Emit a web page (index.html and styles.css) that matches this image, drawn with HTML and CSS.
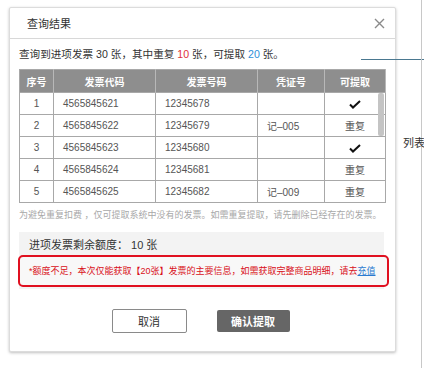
FILE: index.html
```html
<!DOCTYPE html>
<html lang="zh">
<head>
<meta charset="utf-8">
<link rel="stylesheet" href="styles.css">
</head>
<body>
<div class="page">
  <div class="dialog">
    <div class="dlg-head">
      <span class="dlg-title">查询结果</span>
      <svg class="close" width="11" height="11" viewBox="0 0 11 11"><path d="M1 1L10 10M10 1L1 10" stroke="#8a8a8a" stroke-width="1.4" fill="none"/></svg>
    </div>
    <div class="dlg-body">
      <div class="summary">查询到进项发票 30 张，其中重复 <span class="red">10</span> 张，可提取 <span class="blue">20</span> 张。</div>
      <div class="table-wrap">
        <table class="grid">
          <colgroup>
            <col class="c1"><col class="c2"><col class="c3"><col class="c4"><col class="c5">
          </colgroup>
          <thead>
            <tr><th>序号</th><th>发票代码</th><th>发票号码</th><th>凭证号</th><th>可提取</th></tr>
          </thead>
          <tbody>
            <tr><td class="ctr">1</td><td>4565845621</td><td>12345678</td><td></td><td class="ctr"><svg class="chk" width="12" height="9" viewBox="0 0 12 9"><path d="M1 4.5L4 7.5L11 1" stroke="#111" stroke-width="2" fill="none"/></svg></td></tr>
            <tr><td class="ctr">2</td><td>4565845622</td><td>12345679</td><td>记–005</td><td class="ctr">重复</td></tr>
            <tr><td class="ctr">3</td><td>4565845623</td><td>12345680</td><td></td><td class="ctr"><svg class="chk" width="12" height="9" viewBox="0 0 12 9"><path d="M1 4.5L4 7.5L11 1" stroke="#111" stroke-width="2" fill="none"/></svg></td></tr>
            <tr><td class="ctr">4</td><td>4565845624</td><td>12345681</td><td></td><td class="ctr">重复</td></tr>
            <tr><td class="ctr">5</td><td>4565845625</td><td>12345682</td><td>记–009</td><td class="ctr">重复</td></tr>
          </tbody>
        </table>
        <div class="thumb"></div>
      </div>
      <div class="note">为避免重复扣费 ，仅可提取系统中没有的发票。如需重复提取，请先删除已经存在的发票。</div>
      <div class="quota">
        <div class="quota-line">进项发票剩余额度： 10 张</div>
        <div class="warn">*额度不足，本次仅能获取【20张】发票的主要信息，如需获取完整商品明细，请去<a class="link">充值</a></div>
      </div>
      <div class="actions">
        <button class="btn btn-cancel">取消</button>
        <button class="btn btn-ok">确认提取</button>
      </div>
    </div>
  </div>
  <div class="anno-line"></div>
  <div class="anno-edge"></div>
  <div class="anno-label">列表</div>
</div>
</body>
</html>
```

FILE: styles.css
```css
* { box-sizing: border-box; }
html, body { margin: 0; padding: 0; background: #fff; }
body {
  font-family: "Liberation Sans", "Noto Sans CJK SC", sans-serif;
  color: #333;
  width: 424px;
  height: 368px;
  overflow: hidden;
}
.page { position: relative; width: 424px; height: 368px; padding: 7px 0 0 9px; }
.dialog {
  width: 387px;
  height: 345px;
  background: #fff;
  border: 1px solid #dcdcdc;
  border-radius: 2px;
  box-shadow: 0 1px 3px rgba(0,0,0,0.25);
  display: flex;
  flex-direction: column;
}
.dlg-head {
  height: 31px;
  border-bottom: 1px solid #d8d8d8;
  display: flex;
  align-items: center;
  justify-content: space-between;
  padding: 0 10px 0 17px;
}
.dlg-title { font-size: 11px; color: #333; }
.close { display: block; }
.dlg-body { padding: 0 10px 0 9px; display: flex; flex-direction: column; }
.summary { height: 30px; line-height: 30px; font-size: 10.6px; color: #333; white-space: nowrap; }
.red { color: #e0303a; }
.blue { color: #2f8fd8; }
.table-wrap { position: relative; width: 366px; }
.grid {
  width: 366px;
  border-collapse: collapse;
  table-layout: fixed;
  font-size: 10px;
  border: 1px solid #a8a8a8;
}
.c1 { width: 34px; }
.c2 { width: 102px; }
.c3 { width: 102px; }
.c4 { width: 67px; }
.c5 { width: 61px; }
.grid th {
  height: 23px;
  background: #8e8e8e;
  color: #fff;
  font-weight: bold;
  font-size: 10px;
  border-right: 1px solid #b8b8b8;
  padding: 0;
}
.grid td {
  height: 22px;
  padding: 0 0 0 9px;
  color: #555;
  border: 1px solid #a8a8a8;
  white-space: nowrap;
}
.grid td.ctr { text-align: center; padding: 0; }
.chk { display: inline-block; vertical-align: middle; }
.thumb {
  position: absolute;
  left: 359px;
  top: 24px;
  width: 6px;
  height: 43px;
  background: #c4c4c4;
  border-radius: 2px;
}
.note { height: 24px; line-height: 24px; font-size: 9px; color: #a8a8a8; white-space: nowrap; }
.quota {
  margin-top: 5px;
  width: 365px;
  background: #f3f3f3;
  padding: 3px 0 2px;
}
.quota-line { height: 20px; line-height: 20px; font-size: 11px; color: #333; padding-left: 10px; white-space: nowrap; }
.warn {
  margin: 0 -5px 0 -1px;
  height: 32px;
  line-height: 28px;
  border: 2px solid #e01020;
  border-radius: 5px;
  background: #f8f8f8;
  color: #d81020;
  font-size: 9px;
  padding-left: 9px;
  white-space: nowrap;
}
.link { color: #2a7ad0; text-decoration: underline; }
.actions {
  margin-top: 20px;
  display: flex;
  justify-content: center;
  align-items: center;
  gap: 30px;
  padding-right: 3px;
}
.btn {
  font-family: "Liberation Sans", "Noto Sans CJK SC", sans-serif;
  font-size: 11px;
  border-radius: 2px;
  padding: 0;
}
.btn-cancel { width: 75px; height: 24px; background: #fff; border: 1px solid #8a8a8a; color: #333; }
.btn-ok { width: 73px; height: 22px; background: #666; border: none; color: #fff; font-weight: bold; }
.anno-line { position: absolute; left: 361px; top: 59px; width: 63px; height: 1px; background: #4a7890; }
.anno-edge { position: absolute; left: 421px; top: 0; width: 1px; height: 368px; background: #c8c8c8; }
.anno-label { position: absolute; left: 403px; top: 135px; font-size: 11px; color: #333; line-height: 16px; white-space: nowrap; }
```
